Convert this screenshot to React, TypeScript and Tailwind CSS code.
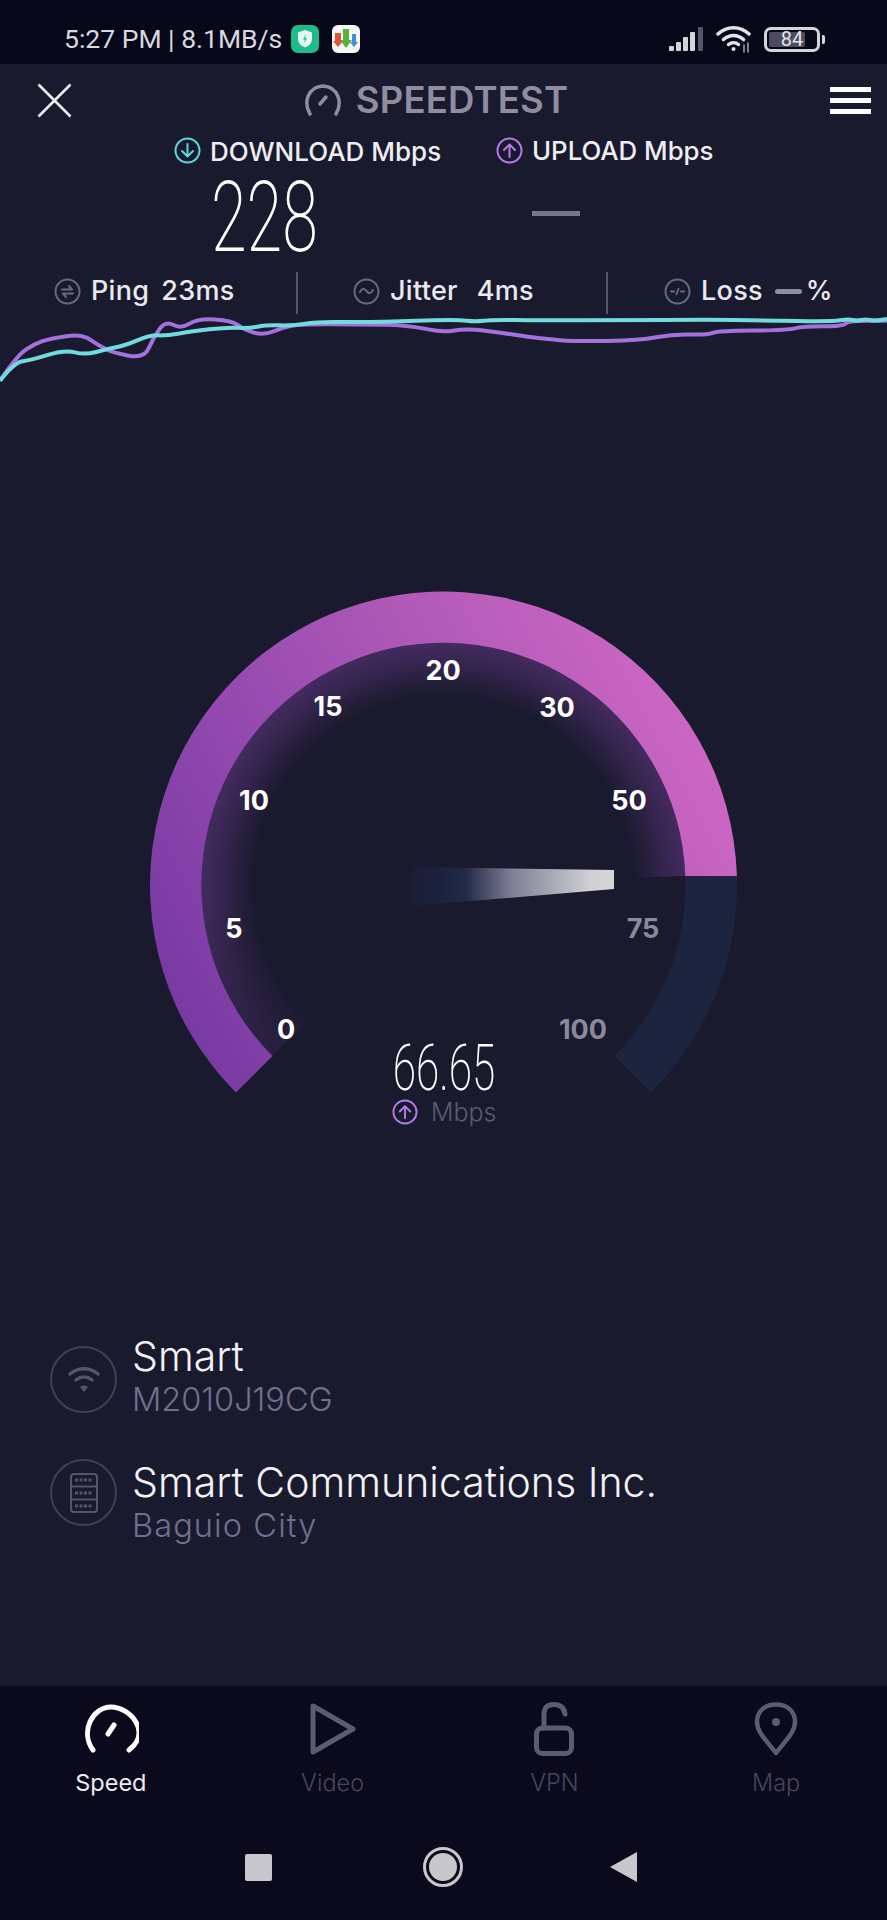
const cyanLine =
  '0,1145 25,1090 55,1083 115,1052 150,1068 190,1050 220,1040 265,1008 295,1010 340,997 400,985 440,988 470,978 520,980 560,968 640,970 720,966 810,962 840,968 870,962 950,964 1100,964 1250,962 1350,964 1470,968 1500,960 1515,966 1530,960 1545,966 1568,960'
const purpleLine =
  '0,1145 30,1070 60,1035 90,1018 145,1005 175,1040 200,1062 255,1078 270,1020 292,965 320,990 350,958 410,965 430,990 465,1010 500,985 530,975 640,976 720,978 780,1000 820,990 860,995 960,1020 1020,1027 1130,1025 1190,1005 1250,1008 1270,995 1390,994 1420,982 1490,982 1500,965 1568,965'

// round off the corners by running through the midpoints of each segment
function smooth(line: string) {
  const pts = line.split(' ').map((p) => p.split(',').map(Number))
  let d = `M${pts[0][0]} ${pts[0][1]}`
  for (let i = 1; i < pts.length - 1; i++) {
    const mx = (pts[i][0] + pts[i + 1][0]) / 2
    const my = (pts[i][1] + pts[i + 1][1]) / 2
    d += `Q${pts[i][0]} ${pts[i][1]} ${mx} ${my}`
  }
  const last = pts[pts.length - 1]
  return d + `L${last[0]} ${last[1]}`
}

const gaugeLabels = [
  { text: '0', cls: 'left-[136px] top-[438px] text-white' },
  { text: '5', cls: 'left-[84px] top-[337px] text-white' },
  { text: '10', cls: 'left-[104px] top-[209px] text-white' },
  { text: '15', cls: 'left-[178px] top-[115px] text-white' },
  { text: '20', cls: 'left-[293px] top-[79px] text-white' },
  { text: '30', cls: 'left-[407px] top-[116px] text-white' },
  { text: '50', cls: 'left-[479px] top-[209px] text-white' },
  { text: '75', cls: 'left-[493px] top-[337px] text-[#8b8a9a]' },
  { text: '100', cls: 'left-[433px] top-[438px] text-[#8b8a9a]' },
]

function ArrowCircle({ color, up, size = 27 }: { color: string; up?: boolean; size?: number }) {
  return (
    <svg width={size} height={size} viewBox="0 0 27 27" fill="none" stroke={color} strokeWidth="2" strokeLinecap="round" strokeLinejoin="round" className="shrink-0">
      <circle cx="13.5" cy="13.5" r="12" />
      {up ? <path d="M13.5 20V7.5M8 13l5.5-5.5L19 13" /> : <path d="M13.5 7v12.5M8 14l5.5 5.5L19 14" />}
    </svg>
  )
}

function StatIcon({ kind }: { kind: 'ping' | 'jitter' | 'loss' }) {
  return (
    <svg width="27" height="27" viewBox="0 0 27 27" fill="none" stroke="#6a697c" strokeWidth="2" strokeLinecap="round" strokeLinejoin="round" className="shrink-0">
      <circle cx="13.5" cy="13.5" r="12" />
      {kind === 'ping' && <path d="M8 11.500h10l-3-3.500M19 15.500H9l3 3.500" />}
      {kind === 'jitter' && <path d="M7 14c2-4 4-4 6.500-1s4.500 3 6.500-1" />}
      {kind === 'loss' && <path d="M7 13.500h3M12.500 16l2-5M17 13.500h3" />}
    </svg>
  )
}

function Stat({ kind, label, value, gap, className }: { kind: 'ping' | 'jitter'; label: string; value: string; gap: string; className: string }) {
  return (
    <div className={`flex items-center h-full pb-[3px] ${className}`}>
      <StatIcon kind={kind} />
      <span className="ml-[10px] text-[27px] tracking-[0.3px] font-medium text-[#e9e9ee]">{label}</span>
      <span className={`${gap} text-[27px] tracking-[0.3px] font-medium text-[#e9e9ee]`}>{value}</span>
    </div>
  )
}

function StatusBar() {
  return (
    <div className="h-[64px] bg-[#07071a] flex items-center pl-[64px] pr-[62px] pt-[14px] shrink-0">
      <span className="text-[26.500px] w-[227px] whitespace-nowrap text-[#d9d9e0] font-['Roboto',sans-serif]">5:27 PM | 8.1MB/s</span>
      <svg width="28" height="28" viewBox="0 0 28 28" className="shrink-0">
        <rect width="28" height="28" rx="7" fill="#1fbb8b" />
        <path d="M14 5l7 2.500v6c0 4.500-3 7.500-7 9-4-1.500-7-4.500-7-9v-6z" fill="#e6f8f2" />
        <path d="M15 9l-3 5.500h2l-1 4 3-5.500h-2z" fill="#1fbb8b" />
      </svg>
      <svg width="28" height="28" viewBox="0 0 28 28" className="ml-[13px] shrink-0">
        <rect width="28" height="28" rx="6" fill="#f6f6f6" />
        <path d="M3 8h6v8h2l-5 6-5-6h2z" fill="#d9553c" />
        <path d="M11 4h6v11h3l-6 8-6-8h3z" fill="#58b13f" />
        <path d="M20 9h4v8h2l-4 5-4-5h2z" fill="#3f8fd2" />
      </svg>
      <div className="ml-auto flex items-center">
        <svg width="35" height="26" viewBox="0 0 35 26" className="shrink-0">
          <rect x="0" y="20" width="5" height="5" rx="1" fill="#d4d4da" />
          <rect x="7" y="16" width="5" height="9" rx="1" fill="#d4d4da" />
          <rect x="14" y="11" width="5" height="14" rx="1" fill="#d4d4da" />
          <rect x="21" y="6" width="5" height="19" rx="1" fill="#d4d4da" />
          <rect x="29" y="1" width="5" height="24" rx="1" fill="#55556a" />
        </svg>
        <svg width="36" height="28" viewBox="0 0 36 28" fill="none" stroke="#e2e2e8" strokeWidth="3.500" strokeLinecap="round" className="ml-[12px] shrink-0">
          <path d="M2 9c9-8.500 22-8.500 31 0M7.500 14.500c6-5.500 14-5.500 20 0M12.500 19.500c3-2.500 7-2.500 10 0" />
          <circle cx="17.500" cy="24" r="2" fill="#e2e2e8" stroke="none" />
          <path d="M28 20v7M32 18v9" strokeWidth="1.500" stroke="#a8a8b2" />
        </svg>
        <div className="ml-[12px] flex items-center">
          <div className="w-[56px] h-[25px] rounded-[7px] border-[3px] border-[#d4d4da] p-[2px] relative">
            <div className="h-full w-[36px] bg-[#4c4c5e] rounded-[2px]" />
            <span className="absolute inset-0 flex items-center justify-center text-[20px] text-[#e4e4ea] font-['Roboto',sans-serif]">84</span>
          </div>
          <div className="w-[3px] h-[9px] ml-[2px] bg-[#d4d4da] rounded-r-[2px]" />
        </div>
      </div>
    </div>
  )
}

function Header() {
  return (
    <div className="h-[72px] flex items-center justify-between pl-[37px] pr-[16px] shrink-0">
      <svg width="35" height="35" viewBox="0 0 35 35" fill="none" stroke="#f2f2f5" strokeWidth="2.500">
        <path d="M1.500 1.500l32 32M33.500 1.500l-32 32" />
      </svg>
      <div className="flex items-center -ml-[30px]">
        <svg width="38" height="32" viewBox="0 0 38 32" fill="none" stroke="#8f8ea0" strokeWidth="3.500" strokeLinecap="round">
          <path d="M6 30C-1 18 4 3 19 2c15 1 20 16 13 28" />
          <path d="M16 20l6-7" />
        </svg>
        <span className="ml-[14px] text-[36.500px] font-semibold leading-none text-[#8f8ea0] tracking-[0.2px]">SPEEDTEST</span>
      </div>
      <div className="w-[41px] flex flex-col gap-[6px]">
        <div className="h-[5px] bg-white" />
        <div className="h-[5px] bg-white" />
        <div className="h-[5px] bg-white" />
      </div>
    </div>
  )
}

function Results() {
  return (
    <div className="flex pl-[174px] shrink-0">
      <div className="w-[322px]">
        <div className="h-[28px] flex items-center">
          <ArrowCircle color="#5fd6da" />
          <span className="ml-[9px] mt-[2px] text-[26px] font-medium text-[#eeeef2] whitespace-nowrap">DOWNLOAD Mbps</span>
        </div>
        <div className="pl-[37px] h-[108px] flex items-center">
          <span className="block font-['Roboto',sans-serif] font-extralight text-[98px] leading-none text-white origin-left scale-x-[0.66]">228</span>
        </div>
      </div>
      <div>
        <div className="h-[28px] flex items-center">
          <ArrowCircle color="#b57be8" up />
          <span className="ml-[9px] mt-[2px] text-[25.800px] font-medium text-[#eeeef2] whitespace-nowrap">UPLOAD Mbps</span>
        </div>
        <div className="pl-[36px] pt-[47px]">
          <div className="w-[48px] h-[5px] bg-[#77758a]" />
        </div>
      </div>
    </div>
  )
}

function Stats() {
  return (
    <div className="h-[42px] flex shrink-0">
      <Stat kind="ping" label="Ping" value="23ms" gap="ml-[12px]" className="w-[296px] pl-[54px]" />
      <div className="w-[2px] bg-[#55546a]" />
      <Stat kind="jitter" label="Jitter" value="4ms" gap="ml-[19px]" className="w-[308px] pl-[55px]" />
      <div className="w-[2px] bg-[#55546a]" />
      <div className="flex items-center h-full pb-[3px] pl-[56px]">
        <StatIcon kind="loss" />
        <span className="ml-[10px] text-[27px] tracking-[0.3px] font-medium text-[#e9e9ee]">Loss</span>
        <div className="ml-[12px] w-[27px] h-[5px] rounded-full bg-[#8f8ea0]" />
        <span className="ml-[4px] text-[27px] font-medium text-[#e9e9ee]">%</span>
      </div>
    </div>
  )
}

function Chart() {
  return (
    <svg width="887" height="80" viewBox="0 930 1568 240" preserveAspectRatio="none" fill="none" strokeLinejoin="round" className="block -mt-[5px] shrink-0">
      <path d={smooth(purpleLine)} stroke="#a370dc" strokeWidth="4" vectorEffect="non-scaling-stroke" />
      <path d={smooth(cyanLine)} stroke="#72dbdd" strokeWidth="4" vectorEffect="non-scaling-stroke" />
    </svg>
  )
}

function Gauge() {
  return (
    <div className="relative w-[587px] h-[540px] ml-[150px] mt-[202px] shrink-0">
      <svg width="587" height="501" viewBox="150 592 587 501" fill="none" className="block">
        <defs>
          <linearGradient id="arcFill" gradientUnits="userSpaceOnUse" x1="180" y1="1090" x2="737" y2="800">
            <stop offset="0" stopColor="#7437a0" />
            <stop offset="0.35" stopColor="#9449b0" />
            <stop offset="0.65" stopColor="#ae59b6" />
            <stop offset="1" stopColor="#cd66c4" />
          </linearGradient>
          <radialGradient id="glowFill" gradientUnits="userSpaceOnUse" cx="443.500" cy="886" r="243">
            <stop offset="0.78" stopColor="#412a5c" stopOpacity="0" />
            <stop offset="0.92" stopColor="#412a5c" stopOpacity="0.75" />
            <stop offset="1" stopColor="#442b60" />
          </radialGradient>
          <linearGradient id="glowFadeFill" gradientUnits="userSpaceOnUse" x1="0" y1="900" x2="0" y2="1060">
            <stop offset="0" stopColor="white" />
            <stop offset="1" stopColor="white" stopOpacity="0.35" />
          </linearGradient>
          <mask id="glowFade" maskUnits="userSpaceOnUse" x="150" y="592" width="587" height="501">
            <rect x="150" y="592" width="587" height="501" fill="url(#glowFadeFill)" />
          </mask>
          <linearGradient id="needleFill" gradientUnits="userSpaceOnUse" x1="411" y1="0" x2="614" y2="0">
            <stop offset="0" stopColor="#1a1c33" />
            <stop offset="0.14" stopColor="#1b2240" />
            <stop offset="0.27" stopColor="#222a48" />
            <stop offset="0.5" stopColor="#7f8195" />
            <stop offset="0.88" stopColor="#cfcfd4" />
            <stop offset="1" stopColor="#d6d6da" />
          </linearGradient>
        </defs>
        <path d="M272.500 1057A242 242 0 1 1 685.300 877L443.500 886Z" fill="url(#glowFill)" mask="url(#glowFade)" />
        <path d="M236 1093.500A293.500 293.500 0 1 1 736.900 877L685.300 877A242 242 0 1 0 272.500 1057Z" fill="url(#arcFill)" />
        <path d="M736.900 877A293.500 293.500 0 0 1 651 1093.500L614.500 1057A242 242 0 0 0 685.300 877Z" fill="#1c2440" />
        <path d="M411 868L614 871L614 890L411 907Z" fill="url(#needleFill)" />
      </svg>
      {gaugeLabels.map((l) => (
        <span key={l.text} className={`absolute -translate-x-1/2 -translate-y-1/2 text-[27px] font-bold leading-none ${l.cls}`}>
          {l.text}
        </span>
      ))}
      <span className="absolute left-[294px] top-[478px] -translate-x-1/2 -translate-y-1/2 font-['Roboto',sans-serif] font-extralight text-[64px] leading-none text-white scale-x-[0.66]">66.65</span>
      <div className="absolute left-[242px] top-[508px] flex items-center">
        <ArrowCircle color="#b57be8" up size={26} />
        <span className="ml-[13px] text-[25px] leading-none text-[#5c5b70] font-light">Mbps</span>
      </div>
    </div>
  )
}

function InfoRow({ icon, title, sub, iconClass, subClass }: { icon: React.ReactNode; title: string; sub: string; iconClass: string; subClass?: string }) {
  return (
    <div className="flex items-start">
      <div className={`w-[67px] h-[67px] rounded-full border-2 border-[#3f3f55] flex items-center justify-center shrink-0 ${iconClass}`}>{icon}</div>
      <div className="ml-[15px]">
        <div className="text-[41px] font-light leading-[46px] text-[#f2f2f5] whitespace-nowrap">{title}</div>
        <div className={`text-[32.500px] font-light leading-[42px] text-[#71708a] whitespace-nowrap ${subClass ?? ''}`}>{sub}</div>
      </div>
    </div>
  )
}

function NavItem({ label, active, children }: { label: string; active?: boolean; children: React.ReactNode }) {
  return (
    <div className="flex flex-col items-center">
      <div className="h-[62px] flex items-center justify-center">{children}</div>
      <span className={`mt-[9px] text-[23.500px] leading-[28px] ${active ? 'text-[#ececf0]' : 'text-[#47465a] font-light'}`}>{label}</span>
    </div>
  )
}

function BottomNav() {
  return (
    <div className="mt-auto h-[234px] bg-[#0a0a1c] shrink-0">
      <div className="grid grid-cols-4 pt-[12px]">
        <NavItem label="Speed" active>
          <svg width="56" height="50" viewBox="0 0 56 50" fill="none" stroke="white" strokeWidth="5" strokeLinecap="round">
            <path d="M10 46C-3 28 9 3 28 3s41 25 18 43" />
            <path d="M25 30l6-9" />
          </svg>
        </NavItem>
        <NavItem label="Video">
          <svg width="46" height="52" viewBox="0 0 46 52" fill="none" stroke="#5d5c6f" strokeWidth="5" strokeLinejoin="round">
            <path d="M3 3L43 26L3 49Z" />
          </svg>
        </NavItem>
        <NavItem label="VPN">
          <svg width="40" height="54" viewBox="0 0 40 54" fill="none" stroke="#5d5c6f" strokeWidth="5" strokeLinecap="round">
            <path d="M10 26V13C10 5 14 2.500 20 2.500S30 5 31 12" />
            <rect x="2.500" y="26" width="35" height="25.500" rx="6" />
          </svg>
        </NavItem>
        <NavItem label="Map">
          <svg width="44" height="54" viewBox="0 0 44 54" fill="none" stroke="#5d5c6f" strokeWidth="4.500" strokeLinejoin="round">
            <path d="M22 51C12 38 3 30 3 20C3 9 11 2.500 22 2.500S41 9 41 20C41 30 32 38 22 51Z" />
            <circle cx="22" cy="20" r="4" fill="#5d5c6f" stroke="none" />
          </svg>
        </NavItem>
      </div>
      <div className="flex items-center justify-center pt-[50px] pr-[6px]">
        <div className="w-[27px] h-[27px] rounded-[2px] bg-[#c8c8cc]" />
        <div className="ml-[151px] w-[40px] h-[40px] rounded-full border-[3px] border-[#c8c8cc] flex items-center justify-center">
          <div className="w-[28px] h-[28px] rounded-full bg-[#c8c8cc]" />
        </div>
        <svg width="27" height="30" viewBox="0 0 27 30" className="ml-[147px]">
          <path d="M27 0V30L0 15Z" fill="#c8c8cc" />
        </svg>
      </div>
    </div>
  )
}

export default function App() {
  return (
    <div className="w-[887px] h-[1920px] flex flex-col bg-[#1a1a2e] overflow-hidden font-['Inter',sans-serif]">
      <StatusBar />
      <Header />
      <Results />
      <Stats />
      <Chart />
      <Gauge />
      <div className="pl-[50px] mt-[202px] flex flex-col gap-[38px]">
        <InfoRow
          title="Smart"
          sub="M2010J19CG"
          iconClass="mt-[13px]"
          icon={
            <svg width="34" height="30" viewBox="0 0 34 30" fill="none" stroke="#55546a" strokeWidth="3.500" strokeLinecap="round">
              <path d="M3 9c8-7 20-7 28 0M9 15c5-4 11-4 16 0" />
              <path d="M17 27l-4-5c2-2 6-2 8 0z" fill="#55546a" stroke="none" />
            </svg>
          }
        />
        <InfoRow
          title="Smart Communications Inc."
          sub="Baguio City"
          iconClass="mt-0"
          subClass="tracking-[1.100px]"
          icon={
            <svg width="28" height="40" viewBox="0 0 28 40" fill="none" stroke="#55546a" strokeWidth="2">
              <rect x="1" y="1" width="26" height="38" rx="3" />
              <path d="M1 13.500h26M1 26.500h26" />
              <path d="M5 7h18M5 20h18M5 33h18" strokeWidth="3" strokeDasharray="3 1.500" />
            </svg>
          }
        />
      </div>
      <BottomNav />
    </div>
  )
}
